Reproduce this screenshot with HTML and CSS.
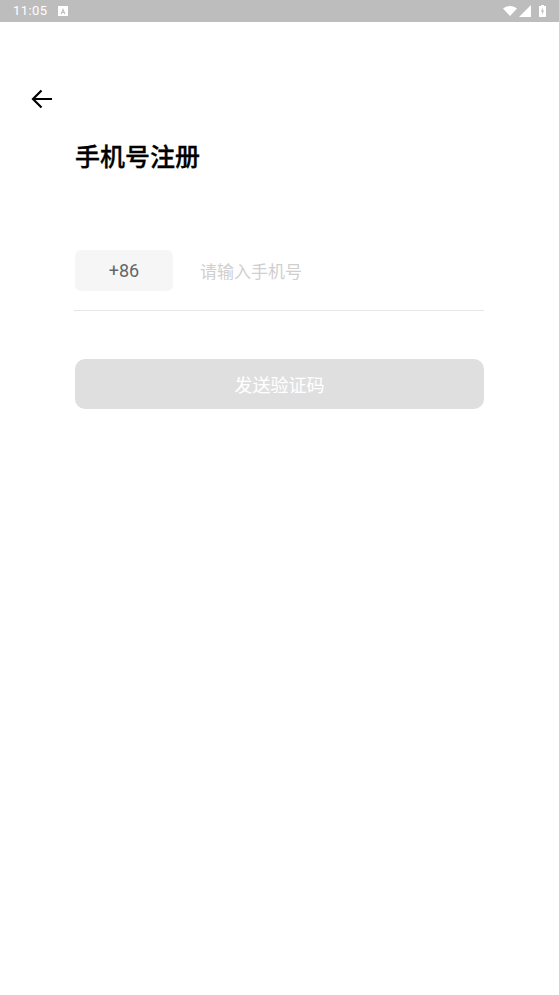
FILE: index.html
```html
<!DOCTYPE html>
<html lang="zh">
<head>
<meta charset="utf-8">
<title>手机号注册</title>
<link rel="stylesheet" href="styles.css">
</head>
<body>
<div class="status">
  <div class="status-left">
    <span class="time">11:05</span>
    <svg class="notif" width="10" height="10" viewBox="0 0 10 10"><path fill="#fff" fill-rule="evenodd" d="M0 0h10v10H0z M5 2 2.6 8h1.2l.4-1.1h1.6L6.2 8h1.2L5 2z M4.6 5.9 5 4.6l.4 1.3z"/></svg>
  </div>
  <div class="status-right">
    <svg width="14" height="10" viewBox="0 0 14 10"><path fill="#fff" d="M0 2.6C2 .9 4.4 0 7 0s5 .9 7 2.6L7 10z"/></svg>
    <svg width="12" height="12" viewBox="0 0 12 12"><path fill="#fff" d="M12 0v12H0z"/></svg>
    <svg class="batt" width="7" height="12" viewBox="0 0 7 12"><path fill="#fff" d="M2 0h3v1h2v11H0V1h2z"/><path fill="#bdbdbd" d="M3.6 2.5 2 6.6h1.2V10l1.8-4.4H3.7z"/></svg>
  </div>
</div>
<main class="page">
  <button class="back" aria-label="返回">
    <svg width="22" height="20" viewBox="0 0 22 20"><path fill="none" stroke="#000" stroke-width="2.2" d="M21 10H2.5M10.5 1.5 2 10l8.5 8.5"/></svg>
  </button>
  <div class="content">
    <h1 class="title">手机号注册</h1>
    <div class="phone-row">
      <div class="code">+86</div>
      <div class="placeholder">请输入手机号</div>
    </div>
    <div class="submit">发送验证码</div>
  </div>
</main>
</body>
</html>
```
FILE: styles.css
```css
* { box-sizing: border-box; }
html, body { margin: 0; padding: 0; }
body {
  width: 559px;
  height: 995px;
  overflow: hidden;
  background: #fff;
  font-family: "Roboto", "Noto Sans CJK SC", sans-serif;
}
.status {
  height: 22px;
  background: #bdbdbd;
  display: flex;
  align-items: center;
  justify-content: space-between;
  padding: 0 13px;
  color: #fff;
}
.status-left { display: flex; align-items: center; gap: 11px; }
.time { font-size: 13px; letter-spacing: 0.4px; line-height: 22px; }
.notif { display: block; }
.status-right { display: flex; align-items: center; gap: 2px; }
.status-right svg { display: block; }
.status-right .batt { margin-left: 6px; }
.page { padding-top: 67px; }
.back {
  display: block;
  margin: 0 0 0 31px;
  padding: 0;
  border: 0;
  background: none;
  width: 22px;
  height: 20px;
}
.back svg { display: block; }
.content { padding: 0 75px; }
.title {
  margin: 28px 0 0;
  font-size: 25px;
  line-height: 36px;
  font-weight: 500;
  -webkit-text-stroke: 0.3px #000;
  color: #000;
  font-family: "Noto Sans CJK SC", sans-serif;
}
.phone-row {
  margin: 77px 0 0 -1px;
  padding-left: 1px;
  height: 61px;
  display: flex;
  align-items: flex-start;
  gap: 27px;
  border-bottom: 1px solid #e6e6e6;
}
.code {
  width: 98px;
  height: 41px;
  border-radius: 6px;
  background: #f6f6f6;
  color: #666;
  font-size: 18px;
  line-height: 41px;
  text-align: center;
}
.placeholder {
  font-size: 17px;
  line-height: 42px;
  color: #cfcfcf;
  font-family: "Noto Sans CJK SC", sans-serif;
}
.submit {
  margin-top: 48px;
  height: 50px;
  border-radius: 10px;
  background: #dfdfdf;
  color: #fff;
  font-size: 18px;
  line-height: 51px;
  text-align: center;
  font-family: "Noto Sans CJK SC", sans-serif;
}
```
